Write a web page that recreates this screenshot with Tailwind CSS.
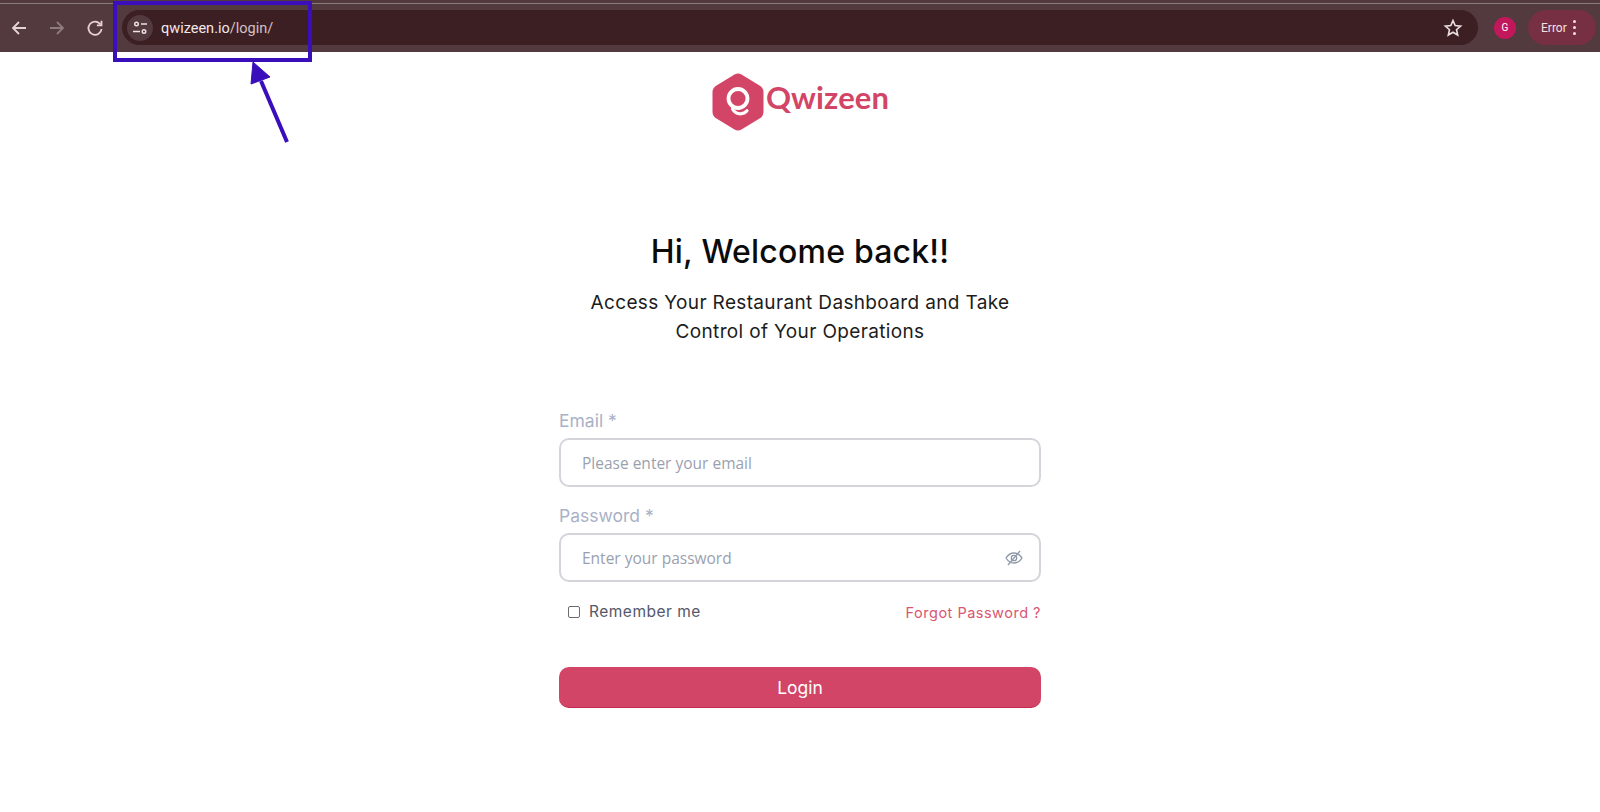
<!DOCTYPE html>
<html lang="en">

<head>
	<meta charset="UTF-8">
	<meta name="viewport" content="width=device-width, initial-scale=1.0">
	<title>Qwizeen Login</title>
	<script src="https://cdn.jsdelivr.net/npm/@tailwindcss/browser@4"></script>
</head>

<body class="bg-white overflow-hidden font-['Inter',sans-serif]">
	<div class="relative w-[1600px] h-[812px]">

		<!-- browser bar -->
		<div class="h-[3px] bg-[#533a3e]"></div>
		<div class="h-[49px] bg-[#533a3e] border-t border-[#8a7a7c] flex items-center pl-[6px] pr-[4px]">
			<div class="flex items-center w-[116px] gap-[18px] pl-[3px] -mt-[1px]">
				<svg class="w-[20px] h-[20px]" viewBox="0 0 20 20" fill="none" stroke="#e6d3d6" stroke-width="1.8">
					<path d="M17 10H4M10 4l-6 6 6 6" />
				</svg>
				<svg class="w-[20px] h-[20px]" viewBox="0 0 20 20" fill="none" stroke="#8f7a7d" stroke-width="1.8">
					<path d="M3 10h13M10 4l6 6-6 6" />
				</svg>
				<svg class="w-[20px] h-[20px]" viewBox="0 0 20 20" fill="none" stroke="#e6d3d6" stroke-width="1.8">
					<path d="M15.5 6.5A6.6 6.6 0 1 0 16.6 11" />
					<path d="M16.5 2.8v4.6h-4.6" />
				</svg>
			</div>
			<div class="w-[1356px] h-[35px] -mt-[1px] rounded-full bg-[#3b1f23] flex items-center pl-[5px] pr-[15px]">
				<div class="w-[26px] h-[26px] rounded-full bg-[#533a3e] flex items-center justify-center">
					<svg class="w-[16px] h-[16px]" viewBox="0 0 16 16" fill="none" stroke="#f0e2e4" stroke-width="1.4">
						<circle cx="4.5" cy="4" r="1.8" />
						<path d="M9 4h6M1 11.5h7" />
						<circle cx="12" cy="11.5" r="1.8" />
					</svg>
				</div>
				<span class="ml-[8px] mt-[2px] text-[14.500px] text-[#f3e6e8] font-['Roboto',sans-serif]">qwizeen.io<span class="text-[#d5c1c4]">/login/</span></span>
				<svg class="ml-auto w-[20px] h-[20px]" viewBox="0 0 20 20" fill="none" stroke="#ecdfe1" stroke-width="1.6">
					<path d="M10 2.6l2.2 5 5.4.5-4.1 3.6 1.2 5.3-4.7-2.8-4.7 2.8 1.2-5.3-4.1-3.6 5.4-.5z" />
				</svg>
			</div>
			<div class="w-[22px] h-[22px] ml-[16px] -mt-[1px] rounded-full bg-[#c2185b] flex items-center justify-center text-[10px] text-white font-['Roboto',sans-serif]">G</div>
			<div class="w-[68px] h-[35px] ml-[12px] -mt-[1px] rounded-full bg-[#762f43] flex items-center pl-[13px] gap-[6px]">
				<span class="text-[12px] text-[#f3e0e4] font-['Roboto',sans-serif]">Error</span>
				<div class="flex flex-col gap-[3px]">
					<div class="w-[3px] h-[3px] rounded-full bg-[#f3e0e4]"></div>
					<div class="w-[3px] h-[3px] rounded-full bg-[#f3e0e4]"></div>
					<div class="w-[3px] h-[3px] rounded-full bg-[#f3e0e4]"></div>
				</div>
			</div>
		</div>

		<!-- logo -->
		<div class="flex justify-center items-center mt-[21px] h-[58px]">
			<svg class="w-[54px] h-[58px]" viewBox="0 0 53 58">
				<path d="M26.5 0.500Q28 0.500 30 1.600L48 12.500Q52 15 52 19V39Q52 43 48 45.500L30 56.400Q26.500 58.400 23 56.400L5 45.500Q1 43 1 39V19Q1 15 5 12.500L23 1.600Q25 0.500 26.500 0.500Z" fill="#d24566" />
				<circle cx="26.500" cy="25.500" r="9.500" fill="none" stroke="#fff" stroke-width="3.800" />
				<path d="M21 36c2 3.500 5 4.800 8 4.800 3 0 5-1.200 6.500-3" fill="none" stroke="#fff" stroke-width="3.200" stroke-linecap="round" />
			</svg>
			<span class="ml-[1px] -mt-[9px] text-[31px] leading-none font-bold text-[#d24566] font-['Lato',sans-serif] tracking-[0.1px]">Qwizeen</span>
		</div>

		<!-- heading -->
		<div class="mt-[101px] flex flex-col items-center text-black">
			<h1 class="text-[32px] leading-[40px] font-medium text-[#0b0b0b] h-[40px] tracking-[0.2px]">Hi, Welcome back!!</h1>
			<p class="mt-[16px] text-[19px] leading-[29px] text-center text-[#1c1c1c] tracking-[0.35px]">Access Your Restaurant Dashboard and Take<br>Control of Your Operations</p>
		</div>

		<!-- form -->
		<form class="w-[482px] mx-auto mt-[63px]">
			<label class="block text-[17.500px] leading-[24px] text-[#a9b2c6] h-[29px]">Email *</label>
			<div class="h-[49px] border-2 border-[#d3d5da] rounded-[10px] flex items-center pl-[21px] pt-[2px] text-[15.500px] text-[#9a9fb0] font-['Open_Sans',sans-serif]">Please enter your email</div>

			<label class="block mt-[17px] text-[17.500px] leading-[24px] text-[#a9b2c6] h-[29px]">Password *</label>
			<div class="h-[49px] border-2 border-[#d3d5da] rounded-[10px] flex items-center pl-[21px] pr-[16px] pt-[2px] text-[15.500px] text-[#9a9fb0] font-['Open_Sans',sans-serif]">
				<span>Enter your password</span>
				<svg class="ml-auto -mt-[2px] w-[18px] h-[18px]" viewBox="0 0 18 18" fill="none" stroke="#8d9aa6" stroke-width="1.300">
					<path d="M1 9c2-3.200 4.800-5 8-5s6 1.800 8 5c-2 3.200-4.800 5-8 5s-6-1.800-8-5z" />
					<circle cx="9" cy="9" r="2.700" />
					<path d="M15 2L3 16" />
				</svg>
			</div>

			<div class="flex justify-between mt-[19px] h-[24px]">
				<div class="flex items-center h-[22px] pl-[9px]">
					<div class="w-[12px] h-[12px] border border-[#6b6b6b] rounded-[2px]"></div>
					<span class="ml-[9px] text-[15.500px] text-[#55586a] tracking-[0.5px]">Remember me</span>
				</div>
				<a class="text-[14.500px] leading-[24px] text-[#d9566f] tracking-[0.5px]">Forgot Password ?</a>
			</div>

			<button type="button" class="mt-[42px] w-full h-[41px] pt-[2px] rounded-[10px] bg-[#d24566] border-b border-[#c12a50] text-white text-[17.500px] font-normal">Login</button>
		</form>

		<!-- annotation over the screenshot -->
		<div class="absolute left-[113px] top-[1px] w-[199px] h-[61px] border-[4px] border-[#3a0ebb]"></div>
		<svg class="absolute left-[240px] top-[60px] w-[60px] h-[90px]" viewBox="0 0 60 90">
			<path d="M47 82L21 21" stroke="#3a0ebb" stroke-width="4" fill="none" />
			<path d="M13 2L11 24L30 17Z" fill="#3a0ebb" stroke="#3a0ebb" />
		</svg>
	</div>
</body>

</html>
